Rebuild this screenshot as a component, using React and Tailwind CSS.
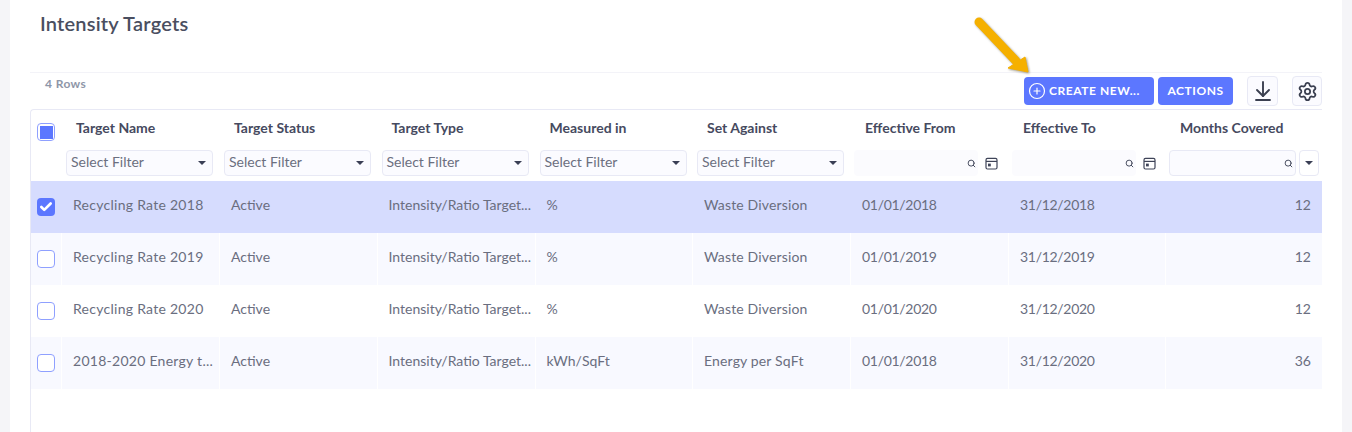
import React from "react";
import { CirclePlus, ArrowDownToLine, Settings, Search, Check } from "lucide-react";

const rows = [
  ["Recycling Rate 2018", "Active", "Intensity/Ratio Target...", "%", "Waste Diversion", "01/01/2018", "31/12/2018", "12"],
  ["Recycling Rate 2019", "Active", "Intensity/Ratio Target...", "%", "Waste Diversion", "01/01/2019", "31/12/2019", "12"],
  ["Recycling Rate 2020", "Active", "Intensity/Ratio Target...", "%", "Waste Diversion", "01/01/2020", "31/12/2020", "12"],
  ["2018-2020 Energy t...", "Active", "Intensity/Ratio Target...", "kWh/SqFt", "Energy per SqFt", "01/01/2018", "31/12/2020", "36"],
];
const cols = "grid grid-cols-[31px_158px_157.5px_158px_157.5px_158px_158px_157px_1fr]";
const tracking = ["tracking-[0.27px]", "", "", "", "tracking-[0.15px]", "tracking-[-0.3px]", "tracking-[-0.3px]", ""];

function Caret() {
  return <span className="w-0 h-0 border-l-[4px] border-r-[4px] border-t-[4px] border-l-transparent border-r-transparent border-t-[#3a3f55]" />;
}

function SelectFilter() {
  return (
    <div className="ml-1 w-[147px] h-[26px] rounded-[4px] border border-[#e8e9f5] bg-[#fbfbff] flex items-center justify-between pl-[4px] pr-[6px] text-[14px] text-[#6b6f80]">
      <span className="pb-[3px]">Select Filter</span>
      <Caret />
    </div>
  );
}

function Cal() {
  return (
    <svg width="13" height="13" viewBox="0 0 13 13" fill="none" stroke="#3f4458" strokeWidth="1.2">
      <rect x="1" y="1.4" width="11" height="10.6" rx="1.5" />
      <path d="M1 4.4h11" />
      <rect x="3" y="6.6" width="2.8" height="2.8" fill="#3f4458" stroke="none" />
    </svg>
  );
}

function DateFilter() {
  return (
    <div className="ml-[3px] flex items-center">
      <div className="w-[124px] h-[26px] rounded-[4px] bg-[#fbfbfe] flex items-center justify-end pr-[2px]">
        <Search size={9} strokeWidth={2.5} className="text-[#3f4458]" />
      </div>
      <div className="ml-[7px]"><Cal /></div>
    </div>
  );
}

function Head({ label, children }) {
  return (
    <div className="flex flex-col">
      <div className="h-[40px] pl-[14px] pb-[5px] flex items-center text-[14px] font-bold text-[#464a60]">{label}</div>
      {children}
    </div>
  );
}

export default function App() {
  return (
    <div className="relative h-[432px] overflow-hidden bg-[#f5f5f8] px-[10px] font-['Lato','Noto_Sans',sans-serif]">
      <div className="h-full w-[1332px] bg-white px-5">
        <h1 className="pl-[10px] pt-[9px] h-[72px] text-[20px] tracking-[0.2px] leading-[28px] font-semibold text-[#4a4e60]">Intensity Targets</h1>
        <div className="h-[37px] border-t border-[#f3f3f8] flex justify-between">
          <div className="pl-[15px] pt-[3px] text-[12px] tracking-[0.4px] leading-[16px] font-bold text-[#8e96a8]">4 Rows</div>
          <div className="flex items-start pt-[3px]">
            <button className="mt-[1px] w-[130px] h-[28px] rounded-[4px] bg-[#5c77ff] text-white text-[12px] tracking-[0.55px] font-bold flex items-center pl-[4px] gap-[3px]">
              <CirclePlus size={18} strokeWidth={1.6} />
              CREATE NEW...
            </button>
            <button className="ml-[4px] mt-[1px] w-[75px] h-[28px] rounded-[4px] bg-[#5c77ff] text-white text-[12px] tracking-[0.55px] font-bold">ACTIONS</button>
            <div className="ml-[14px] w-[31px] h-[30px] rounded-[4px] border border-[#e8e9f5] bg-[#fbfbff] flex items-center justify-center text-[#3a3f50]">
              <ArrowDownToLine size={24} strokeWidth={1.9} />
            </div>
            <div className="ml-[14px] w-[30px] h-[30px] rounded-[4px] border border-[#e8e9f5] bg-[#fbfbff] flex items-center justify-center text-[#3a3f50]">
              <Settings size={21} strokeWidth={2} />
            </div>
          </div>
        </div>
        <div className="h-[400px] border-t border-l border-[#e8e9f5] rounded-tl-[4px]">
          <div className={`${cols} h-[71px]`}>
            <div className="pl-[6px] pt-[13px]">
              <div className="w-[18px] h-[18px] rounded-[4px] border border-[#8fa0ff] bg-white flex items-center justify-center">
                <div className="w-[13px] h-[13px] bg-[#5c77ff]" />
              </div>
            </div>
            {["Target Name", "Target Status", "Target Type", "Measured in", "Set Against"].map((l) => (
              <Head key={l} label={l}><SelectFilter /></Head>
            ))}
            <Head label="Effective From"><DateFilter /></Head>
            <Head label="Effective To"><DateFilter /></Head>
            <Head label="Months Covered">
              <div className="ml-[3px] flex items-center">
                <div className="w-[127px] h-[26px] rounded-[4px] border border-[#e8e9f5] bg-[#fbfbff] flex items-center justify-end pr-[2px]">
                  <Search size={9} strokeWidth={2.5} className="text-[#3f4458]" />
                </div>
                <div className="ml-[3px] w-[20px] h-[26px] rounded-[4px] border border-[#e8e9f5] flex items-center justify-center"><Caret /></div>
              </div>
            </Head>
          </div>
          {rows.map((r, i) => {
            const selected = i === 0;
            const tinted = i % 2 === 1;
            const bg = selected ? "bg-[#d6dcfe]" : tinted ? "bg-[#f8f9ff]" : "bg-white";
            return (
              <div key={r[0]} className={`${cols} h-[52px] ${selected ? "bg-[#d6dcfe]" : "bg-white"} text-[14px] text-[#6a6e80]`}>
                <div className={`${bg} pl-[6px] pt-[17px] mr-px`}>
                  {selected ? (
                    <div className="w-[18px] h-[18px] rounded-[4px] bg-[#5c77ff] flex items-center justify-center text-white">
                      <Check size={14} strokeWidth={4.5} />
                    </div>
                  ) : (
                    <div className="w-[18px] h-[18px] rounded-[4px] border border-[#8fa0ff] bg-white" />
                  )}
                </div>
                {r.map((c, j) => (
                  <div key={j} className={`${bg} ${tracking[j]} ${j === 7 ? "justify-end pr-[11px]" : "pl-[11px] mr-px"} flex items-start pt-[14px] leading-[20px] whitespace-nowrap`}>{c}</div>
                ))}
              </div>
            );
          })}
        </div>
      </div>
      <svg className="absolute left-[970px] top-[12px] drop-shadow-[1px_1px_1px_rgba(60,50,20,0.5)]" width="66" height="66" viewBox="0 0 66 66" fill="none">
        <path d="M9 10 L46 49" stroke="#f5b000" strokeWidth="9" strokeLinecap="round" />
        <path d="M38 56 L58 60 L55 45 Z" fill="#f5b000" stroke="#f5b000" strokeWidth="1" strokeLinejoin="round" />
      </svg>
    </div>
  );
}
